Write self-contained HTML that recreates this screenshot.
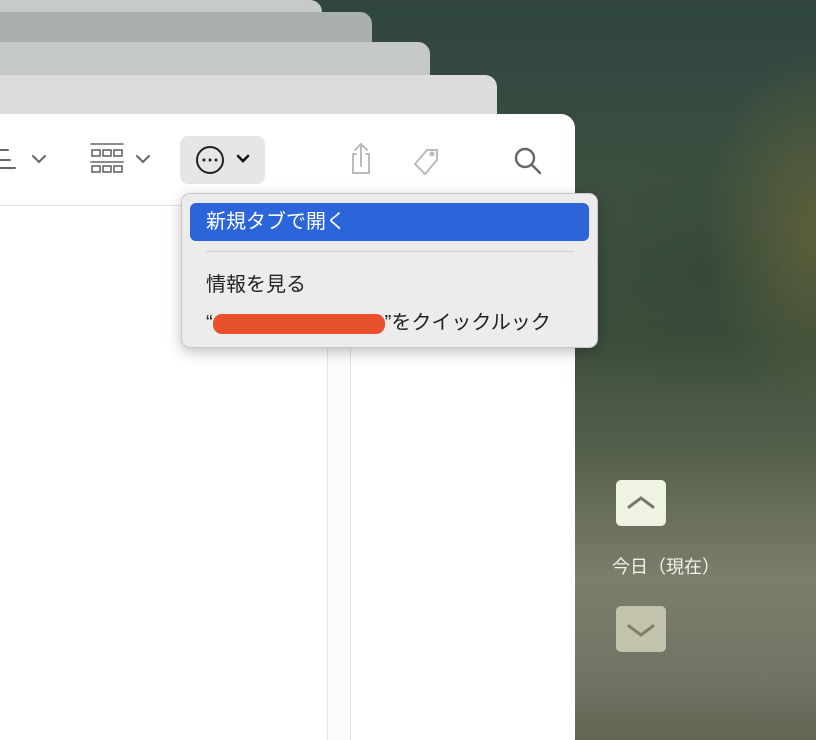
<!DOCTYPE html>
<html><head><meta charset="utf-8"><style>
*{margin:0;padding:0;box-sizing:border-box}
body{width:816px;height:740px;overflow:hidden;position:relative;font-family:"Liberation Sans","Noto Sans CJK JP",sans-serif;
background:radial-gradient(ellipse 110px 180px at 816px 230px,#5a5f3a,transparent),
radial-gradient(ellipse 200px 120px at 720px 270px,#36493a,transparent),
linear-gradient(180deg,#2f4540 0%,#3f5240 30%,#3c4d3a 45%,#56614c 62%,#7c7e6a 78%,#717463 92%,#626552 100%);}
.w{position:absolute;left:0;border-radius:0 12px 0 0}
.front{position:absolute;left:0;top:114px;width:575px;height:626px;background:#fff;border-radius:0 14px 0 0}
.tb{position:absolute;left:0;top:0;width:575px;height:92px;border-bottom:1px solid #e2e2e2}
.menu{position:absolute;left:181px;top:193px;width:417px;height:155px;background:#ececec;border-radius:9px;border:1px solid #c8c8c8;box-shadow:0 4px 14px rgba(0,0,0,.25)}
.hl{position:absolute;left:8px;top:9px;width:399px;height:38px;background:#2b65d9;border-radius:6px;color:#fff;font-size:20px;line-height:38px;padding-left:16px}
.it{position:absolute;left:24px;font-size:20px;color:#222}
.btn{position:absolute;left:616px;width:50px;height:46px;border-radius:5px}
</style></head><body>
<div class="w" style="top:0;width:322px;height:14px;background:#c6cbc9"></div>
<div class="w" style="top:12px;width:372px;height:32px;background:#aab0ae"></div>
<div class="w" style="top:42px;width:430px;height:35px;background:#c4c9c7"></div>
<div class="w" style="top:75px;width:497px;height:42px;background:#dcdcdc"></div>
<div class="front">
 <div class="tb">
  <svg width="575" height="92" style="position:absolute;left:0;top:0" fill="none" stroke-linecap="round">
   <g stroke="#666" stroke-width="2"><path d="M0 36H8M0 46H10M0 54H15"/><path d="M33 42l6 6 6-6"/><path d="M137 42l6 6 6-6"/></g>
   <g stroke="#666" stroke-width="1.6"><path d="M91 30H123M91 48H123"/><rect x="92" y="36" width="8" height="6"/><rect x="103" y="36" width="8" height="6"/><rect x="114" y="36" width="8" height="6"/><rect x="92" y="52" width="8" height="6"/><rect x="103" y="52" width="8" height="6"/><rect x="114" y="52" width="8" height="6"/></g>
   <rect x="180" y="22" width="85" height="48" rx="8" fill="#e6e6e6"/>
   <circle cx="210" cy="46" r="13" stroke="#222" stroke-width="2"/>
   <g fill="#222"><circle cx="204" cy="46" r="1.5"/><circle cx="210" cy="46" r="1.5"/><circle cx="216" cy="46" r="1.5"/></g>
   <path d="M238 42l5 5 5-5" stroke="#111" stroke-width="2.6"/>
   <g stroke="#bbb" stroke-width="2"><path d="M361 30V52M355 36l6-6 6 6M356 40h-3v19h16V40h-3"/>
   <path d="M425 60l-10-10 12-14h10v10l-12 14z"/><circle cx="432" cy="40" r="1.5" fill="#bbb"/></g>
   <g stroke="#666" stroke-width="2.4"><circle cx="525" cy="44" r="9"/><path d="M532 51l8 8"/></g>
  </svg>
 </div>
 <div style="position:absolute;left:327px;top:92px;width:24px;height:534px;background:#fcfcfc;border-left:1px solid #e4e4e4;border-right:1px solid #e4e4e4"></div>
</div>
<div class="menu">
 <div class="hl">新規タブで開く</div>
 <div style="position:absolute;left:24px;top:57px;width:368px;height:1px;background:#cfcfcf"></div>
 <div class="it" style="top:74px">情報を見る</div>
 <div class="it" style="top:112px">“<span style="background:#e8502e;border-radius:9px;display:inline-block;width:172px;height:20px;vertical-align:middle"></span>”をクイックルック</div>
</div>
<div class="btn" style="top:480px;background:#eef3e2"><svg width="50" height="46" fill="none"><path d="M13 27l12-9 12 9" stroke="#777a6a" stroke-width="3" stroke-linecap="round"/></svg></div>
<div style="position:absolute;left:612px;top:553px;color:#f2f2ee;font-size:18px">今日（現在）</div>
<div class="btn" style="top:606px;background:#c2c3aa"><svg width="50" height="46" fill="none"><path d="M13 20l12 9 12-9" stroke="#7e806c" stroke-width="3" stroke-linecap="round"/></svg></div>
</body></html>
